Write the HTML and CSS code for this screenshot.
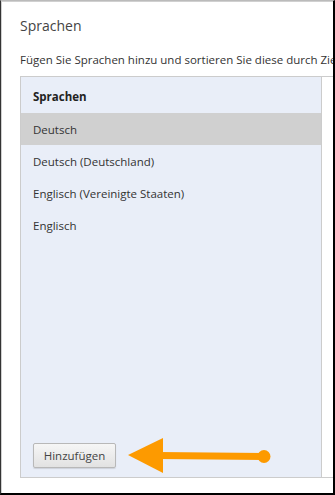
FILE: index.html
```
<!DOCTYPE html>
<html lang="de">
<head>
<meta charset="utf-8">
<title>Sprachen</title>
<link rel="stylesheet" href="styles.css">
</head>
<body>
<div class="frame">
  <h1 class="title">Sprachen</h1>
  <p class="desc">Fügen Sie Sprachen hinzu und sortieren Sie diese durch Ziehen in die gewünschte Reihenfolge.</p>
  <div class="panel">
    <div class="list">
      <div class="head">Sprachen</div>
      <div class="row selected">Deutsch</div>
      <div class="row">Deutsch (Deutschland)</div>
      <div class="row">Englisch (Vereinigte Staaten)</div>
      <div class="row">Englisch</div>
      <div class="actions"><button class="btn">Hinzufügen</button></div>
    </div>
    <div class="side"></div>
  </div>
</div>
<svg class="arrow" width="150" height="40" viewBox="0 0 150 40">
  <line x1="30" y1="17.5" x2="136" y2="18.5" stroke="#fd9a00" stroke-width="7"/>
  <polygon points="0,17 35,0 35,35" fill="#fd9a00"/>
  <circle cx="136" cy="18.5" r="6.5" fill="#fd9a00"/>
</svg>
</body>
</html>
```
FILE: styles.css
```
* { box-sizing: border-box; }
html, body { margin: 0; padding: 0; }
body {
  width: 335px;
  height: 495px;
  position: relative;
  overflow: hidden;
  background: #fff;
  font-family: "Open Sans", "Noto Sans", sans-serif;
  color: #333;
}
.frame {
  width: 335px;
  height: 495px;
  border-left: 1px solid #333;
  border-top: 1px solid #bbb;
  border-right: 2px solid #000;
  border-bottom: 2px solid #000;
  box-shadow: inset 1px 1px 0 #d0d0d0;
  padding-left: 19px;
  display: flex;
  flex-direction: column;
  overflow: hidden;
}
.title {
  margin: 16px 0 0 0;
  font-size: 14px;
  font-weight: normal;
  line-height: 18px;
  color: #444;
}
.desc {
  margin: 17px 0 0 0;
  font-size: 11.5px;
  line-height: 16px;
  white-space: nowrap;
  color: #333;
}
.panel {
  margin-top: 8px;
  height: 402px;
  border-top: 1px solid #ccc;
  border-bottom: 1px solid #ccc;
  display: flex;
}
.list {
  width: 302px;
  background: #e9eef8;
  border-left: 1px solid #ccc;
  border-right: 1px solid #ccc;
  display: flex;
  flex-direction: column;
}
.side { flex: 1; background: #fff; }
.head {
  height: 36px;
  padding-left: 12px;
  padding-top: 2px;
  display: flex;
  align-items: center;
  font-size: 11.5px;
  font-weight: bold;
  color: #222;
}
.row {
  height: 32px;
  padding-left: 12px;
  padding-top: 1px;
  display: flex;
  align-items: center;
  font-size: 11.5px;
  color: #333;
}
.row.selected { background: #d0d0d0; }
.actions {
  margin-top: auto;
  padding: 0 0 9px 12px;
}
.btn {
  width: 83px;
  height: 25px;
  font-family: inherit;
  font-size: 11.5px;
  color: #444;
  background: linear-gradient(#f6f6f6, #e2e2e2);
  border: 1px solid #b8b8b8;
  border-radius: 2px;
  box-shadow: 0 1px 1px rgba(0,0,0,0.12);
  padding: 0;
}
.arrow {
  position: absolute;
  left: 128px;
  top: 438px;
}
```
